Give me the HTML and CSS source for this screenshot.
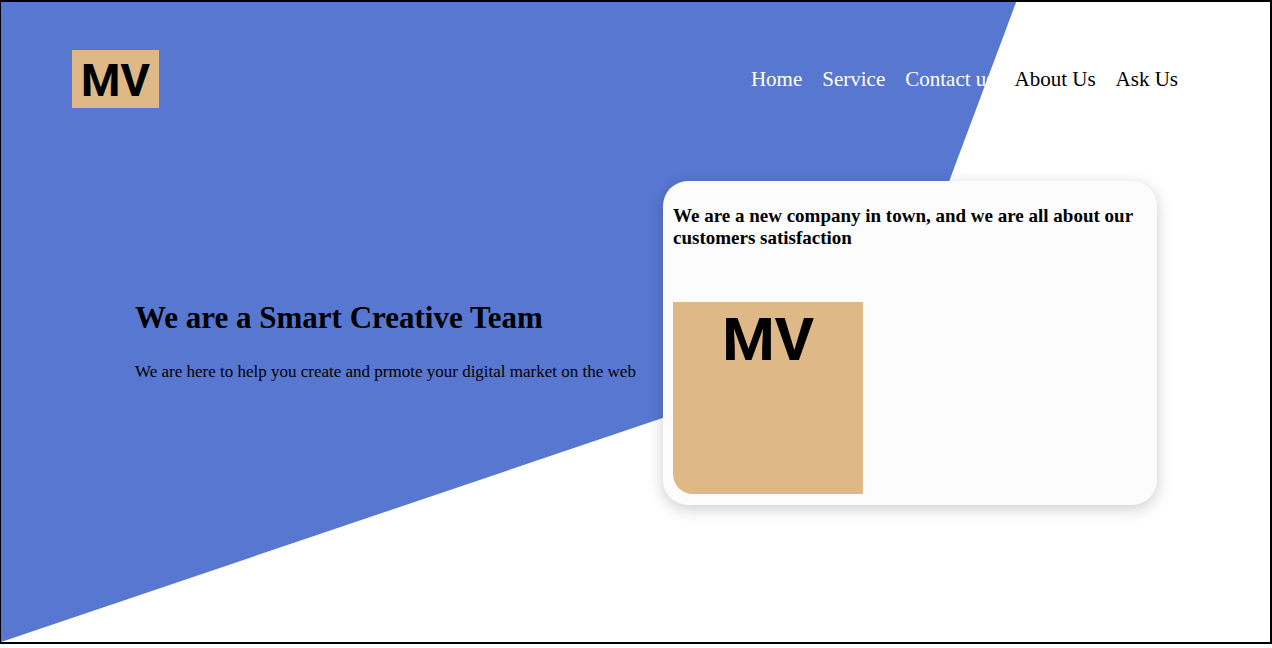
FILE: index.html
```html
<!DOCTYPE html>
<html lang="en">
<head>
<meta charset="utf-8">
<title>MV Creative Team</title>
<link rel="stylesheet" href="styles.css">
</head>
<body>
<div class="page">
  <header class="header">
    <a class="logo" href="#">MV</a>
    <nav class="nav">
      <a class="nav-link" href="#">Home</a>
      <a class="nav-link" href="#">Service</a>
      <a class="nav-link" href="#">Contact us</a>
      <a class="nav-link nav-dark" href="#">About Us</a>
      <a class="nav-link nav-dark" href="#">Ask Us</a>
    </nav>
  </header>
  <main class="hero">
    <section class="intro">
      <h1 class="title">We are a Smart Creative Team</h1>
      <p class="lead">We are here to help you create and prmote your digital market on the web</p>
    </section>
    <aside class="card">
      <h2 class="card-title">We are a new company in town, and we are all about our customers satisfaction</h2>
      <div class="card-logo">MV</div>
    </aside>
  </main>
</div>
</body>
</html>
```
FILE: styles.css
```css
* { box-sizing: border-box; }
body {
  margin: 0;
  font-family: "Liberation Serif", "Times New Roman", serif;
  color: #000;
  background: #fff;
}
.page {
  position: relative;
  isolation: isolate;
  min-height: calc(100vh - 4px);
  border: 2px solid #000;
  border-left-width: 1px;
}
.page::before {
  content: "";
  position: absolute;
  inset: 0;
  z-index: -1;
  background: #5877d0;
  clip-path: polygon(0 0, 80% 0, 70% 53%, 0 100%);
}
.header {
  display: flex;
  justify-content: space-between;
  align-items: center;
  padding: 48px 92px 0 71px;
}
.logo {
  padding: 4px 9px 0;
  font: bold 45px/54px Roboto, sans-serif;
  color: #000;
  background: burlywood;
  text-decoration: none;
}
.nav { display: flex; gap: 20px; }
.nav-link {
  font-size: 21px;
  line-height: 24px;
  color: #fff;
  text-decoration: none;
}
.nav-dark { color: #000; }
.hero {
  display: grid;
  grid-template-columns: minmax(0, 518fr) minmax(0, 494fr);
  align-items: center;
  gap: 10px;
  padding: 73px 113px 0 134px;
}
.intro { padding-bottom: 4px; }
.title {
  margin: 0 0 26px;
  font-size: 31px;
  line-height: 36px;
}
.lead {
  margin: 0;
  font-size: 17px;
  line-height: 20px;
}
.card {
  padding: 24px 10px 11px;
  border-radius: 25px;
  background: #fcfcfc;
  box-shadow: 0 4px 16px rgba(0, 0, 0, 0.2);
}
.card-title {
  margin: 0 0 53px;
  font-size: 19px;
  line-height: 22px;
}
.card-logo {
  width: 190px;
  height: 192px;
  border-bottom-left-radius: 20px;
  font: bold 60px/76px Roboto, sans-serif;
  text-align: center;
  background: burlywood;
}
```
